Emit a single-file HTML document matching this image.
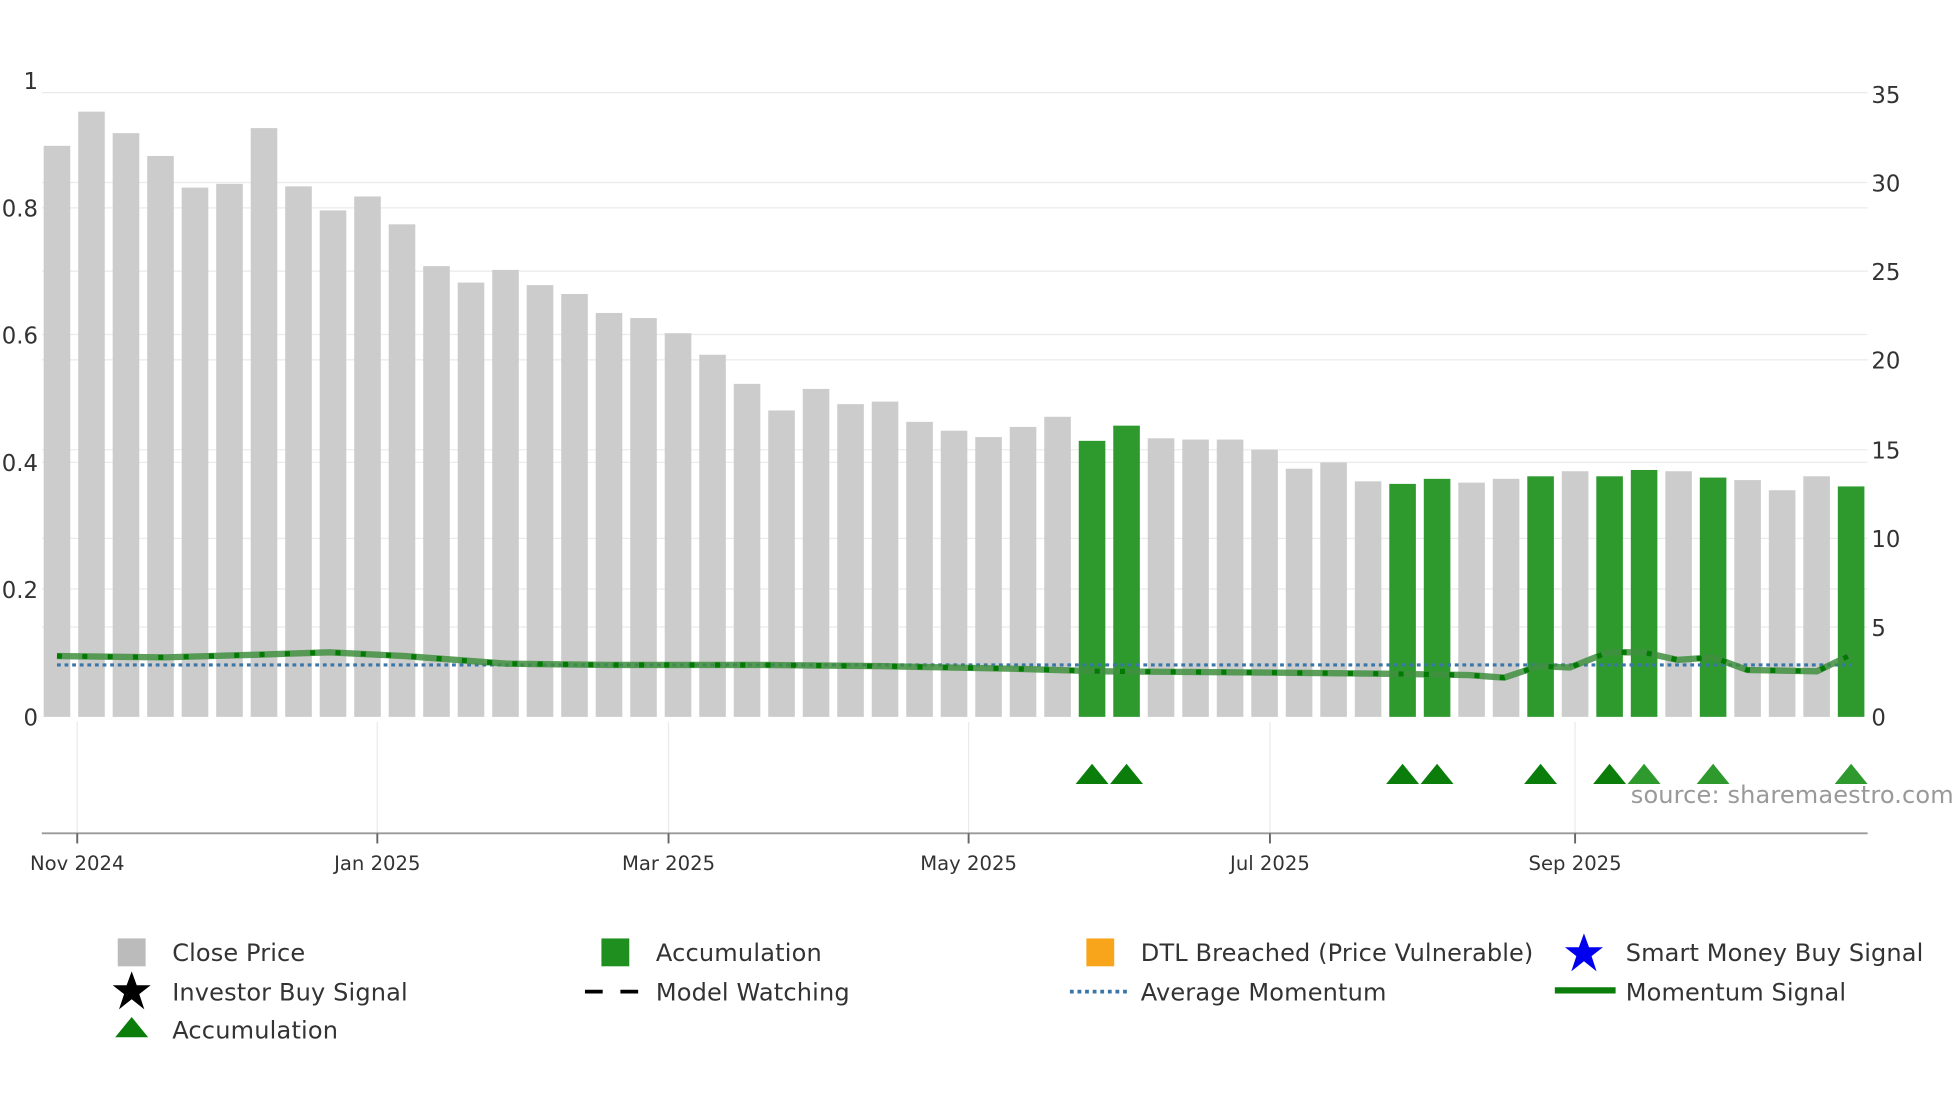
<!DOCTYPE html>
<html><head><meta charset="utf-8"><style>
html,body{margin:0;padding:0;background:#fff;overflow:hidden}
svg{display:block}
text{font-family:"DejaVu Sans","Liberation Sans",sans-serif;fill:#333}
</style></head><body>
<svg width="1960" height="1102" viewBox="0 0 1548 870" xmlns="http://www.w3.org/2000/svg">
<g stroke="#ebebeb" stroke-width="1">
<line x1="33" y1="73" x2="1475" y2="73"/>
<line x1="33" y1="164" x2="1475" y2="164"/>
<line x1="33" y1="264" x2="1475" y2="264"/>
<line x1="33" y1="365" x2="1475" y2="365"/>
<line x1="33" y1="465" x2="1475" y2="465"/>
<line x1="33" y1="144" x2="1475" y2="144"/>
<line x1="33" y1="214" x2="1475" y2="214"/>
<line x1="33" y1="284" x2="1475" y2="284"/>
<line x1="33" y1="355" x2="1475" y2="355"/>
<line x1="33" y1="425" x2="1475" y2="425"/>
<line x1="33" y1="495" x2="1475" y2="495"/>
<line x1="61" y1="570" x2="61" y2="658"/>
<line x1="298" y1="570" x2="298" y2="658"/>
<line x1="528" y1="570" x2="528" y2="658"/>
<line x1="765" y1="570" x2="765" y2="658"/>
<line x1="1003" y1="570" x2="1003" y2="658"/>
<line x1="1244" y1="570" x2="1244" y2="658"/>
</g>
<g fill="#cccccc">
<rect x="34.5" y="115" width="21" height="451"/>
<rect x="61.75" y="88" width="21" height="478"/>
<rect x="89" y="105" width="21" height="461"/>
<rect x="116.25" y="123" width="21" height="443"/>
<rect x="143.5" y="148" width="21" height="418"/>
<rect x="170.75" y="145" width="21" height="421"/>
<rect x="198" y="101" width="21" height="465"/>
<rect x="225.25" y="147" width="21" height="419"/>
<rect x="252.5" y="166" width="21" height="400"/>
<rect x="279.75" y="155" width="21" height="411"/>
<rect x="307" y="177" width="21" height="389"/>
<rect x="334.25" y="210" width="21" height="356"/>
<rect x="361.5" y="223" width="21" height="343"/>
<rect x="388.75" y="213" width="21" height="353"/>
<rect x="416" y="225" width="21" height="341"/>
<rect x="443.25" y="232" width="21" height="334"/>
<rect x="470.5" y="247" width="21" height="319"/>
<rect x="497.75" y="251" width="21" height="315"/>
<rect x="525" y="263" width="21" height="303"/>
<rect x="552.25" y="280" width="21" height="286"/>
<rect x="579.5" y="303" width="21" height="263"/>
<rect x="606.75" y="324" width="21" height="242"/>
<rect x="634" y="307" width="21" height="259"/>
<rect x="661.25" y="319" width="21" height="247"/>
<rect x="688.5" y="317" width="21" height="249"/>
<rect x="715.75" y="333" width="21" height="233"/>
<rect x="743" y="340" width="21" height="226"/>
<rect x="770.25" y="345" width="21" height="221"/>
<rect x="797.5" y="337" width="21" height="229"/>
<rect x="824.75" y="329" width="21" height="237"/>
<rect x="906.5" y="346" width="21" height="220"/>
<rect x="933.75" y="347" width="21" height="219"/>
<rect x="961" y="347" width="21" height="219"/>
<rect x="988.25" y="355" width="21" height="211"/>
<rect x="1015.5" y="370" width="21" height="196"/>
<rect x="1042.75" y="365" width="21" height="201"/>
<rect x="1070" y="380" width="21" height="186"/>
<rect x="1151.75" y="381" width="21" height="185"/>
<rect x="1179" y="378" width="21" height="188"/>
<rect x="1233.5" y="372" width="21" height="194"/>
<rect x="1315.25" y="372" width="21" height="194"/>
<rect x="1369.75" y="379" width="21" height="187"/>
<rect x="1397" y="387" width="21" height="179"/>
<rect x="1424.25" y="376" width="21" height="190"/>
</g>
<g fill="#2e9a2e">
<rect x="852" y="348" width="21" height="218"/>
<rect x="879.25" y="336" width="21" height="230"/>
<rect x="1097.25" y="382" width="21" height="184"/>
<rect x="1124.5" y="378" width="21" height="188"/>
<rect x="1206.25" y="376" width="21" height="190"/>
<rect x="1260.75" y="376" width="21" height="190"/>
<rect x="1288" y="371" width="21" height="195"/>
<rect x="1342.5" y="377" width="21" height="189"/>
<rect x="1451.5" y="384" width="21" height="182"/>
</g>
<line x1="45" y1="525" x2="1462" y2="525" stroke="#3a76a8" stroke-width="2.5" stroke-dasharray="3,3"/>
<polyline fill="none" stroke="#3f8f3f" stroke-opacity="0.85" stroke-width="5" points="45,518 130,519 200,517 260,515 320,518 400,524 480,525 600,525 700,526 800,528 870,530 1000,531 1100,532 1160,533 1188,535 1215,526 1240,527 1270,515 1298,515 1325,521 1353,519 1380,529 1435,530 1462,517"/>
<polyline fill="none" stroke="#007a00" stroke-width="4" stroke-dasharray="4,16" points="45,518 130,519 200,517 260,515 320,518 400,524 480,525 600,525 700,526 800,528 870,530 1000,531 1100,532 1160,533 1188,535 1215,526 1240,527 1270,515 1298,515 1325,521 1353,519 1380,529 1435,530 1462,517"/>
<g fill="#0a7d0a">
<polygon points="849.5,619 862.5,603 875.5,619"/>
<polygon points="876.75,619 889.75,603 902.75,619"/>
<polygon points="1094.75,619 1107.75,603 1120.75,619"/>
<polygon points="1122,619 1135,603 1148,619"/>
<polygon points="1203.75,619 1216.75,603 1229.75,619"/>
<polygon points="1258.25,619 1271.25,603 1284.25,619"/>
</g>
<g fill="#2e9a2e">
<polygon points="1285.5,619 1298.5,603 1311.5,619"/>
<polygon points="1340,619 1353,603 1366,619"/>
<polygon points="1449,619 1462,603 1475,619"/>
</g>
<text x="1288" y="634" font-size="19" textLength="255" style="fill:#999">source: sharemaestro.com</text>
<line x1="33" y1="658" x2="1475" y2="658" stroke="#999" stroke-width="1.5"/>
<g stroke="#666" stroke-width="1.5">
<line x1="61" y1="658" x2="61" y2="666"/><line x1="298" y1="658" x2="298" y2="666"/><line x1="528" y1="658" x2="528" y2="666"/><line x1="765" y1="658" x2="765" y2="666"/><line x1="1003" y1="658" x2="1003" y2="666"/><line x1="1244" y1="658" x2="1244" y2="666"/>
</g>
<g font-size="15.5" text-anchor="middle">
<text x="61" y="687">Nov 2024</text><text x="298" y="687">Jan 2025</text><text x="528" y="687">Mar 2025</text><text x="765" y="687">May 2025</text><text x="1003" y="687">Jul 2025</text><text x="1244" y="687">Sep 2025</text>
</g>
<g font-size="18" text-anchor="end">
<text x="30" y="70">1</text><text x="30" y="171">0.8</text><text x="30" y="271">0.6</text><text x="30" y="372">0.4</text><text x="30" y="472">0.2</text><text x="30" y="573">0</text>
</g>
<g font-size="18">
<text x="1478" y="81">35</text><text x="1478" y="151">30</text><text x="1478" y="221">25</text><text x="1478" y="291">20</text><text x="1478" y="362">15</text><text x="1478" y="432">10</text><text x="1478" y="502">5</text><text x="1478" y="573">0</text>
</g>
<rect x="93" y="741" width="22" height="22" fill="#bbb"/>
<rect x="475" y="741" width="22" height="22" fill="#1f8f1f"/>
<rect x="858" y="741" width="22" height="22" fill="#f8a51c"/>
<polygon fill="#0000ee" points="1251,737 1255,748 1266,748 1257,755 1261,767 1251,759 1241,767 1245,755 1236,748 1247,748"/>
<polygon fill="#000" points="104,767 108,778 119,778 110,785 114,797 104,789 94,797 98,785 89,778 100,778"/>
<line x1="462" y1="783" x2="507" y2="783" stroke="#000" stroke-width="3" stroke-dasharray="14,14"/>
<line x1="845" y1="783" x2="890" y2="783" stroke="#3a76a8" stroke-width="3" stroke-dasharray="3,3"/>
<line x1="1228" y1="782" x2="1276" y2="782" stroke="#0a7d0a" stroke-width="5"/>
<polygon fill="#0a7d0a" points="91,819 104,803 117,819"/>
<g font-size="19">
<text x="136" y="759" textLength="105">Close Price</text>
<text x="518" y="759" textLength="131">Accumulation</text>
<text x="901" y="759" textLength="310">DTL Breached (Price Vulnerable)</text>
<text x="1284" y="759" textLength="235">Smart Money Buy Signal</text>
<text x="136" y="790" textLength="186">Investor Buy Signal</text>
<text x="518" y="790" textLength="153">Model Watching</text>
<text x="901" y="790" textLength="194">Average Momentum</text>
<text x="1284" y="790" textLength="174">Momentum Signal</text>
<text x="136" y="820" textLength="131">Accumulation</text>
</g>
</svg>
</body></html>
